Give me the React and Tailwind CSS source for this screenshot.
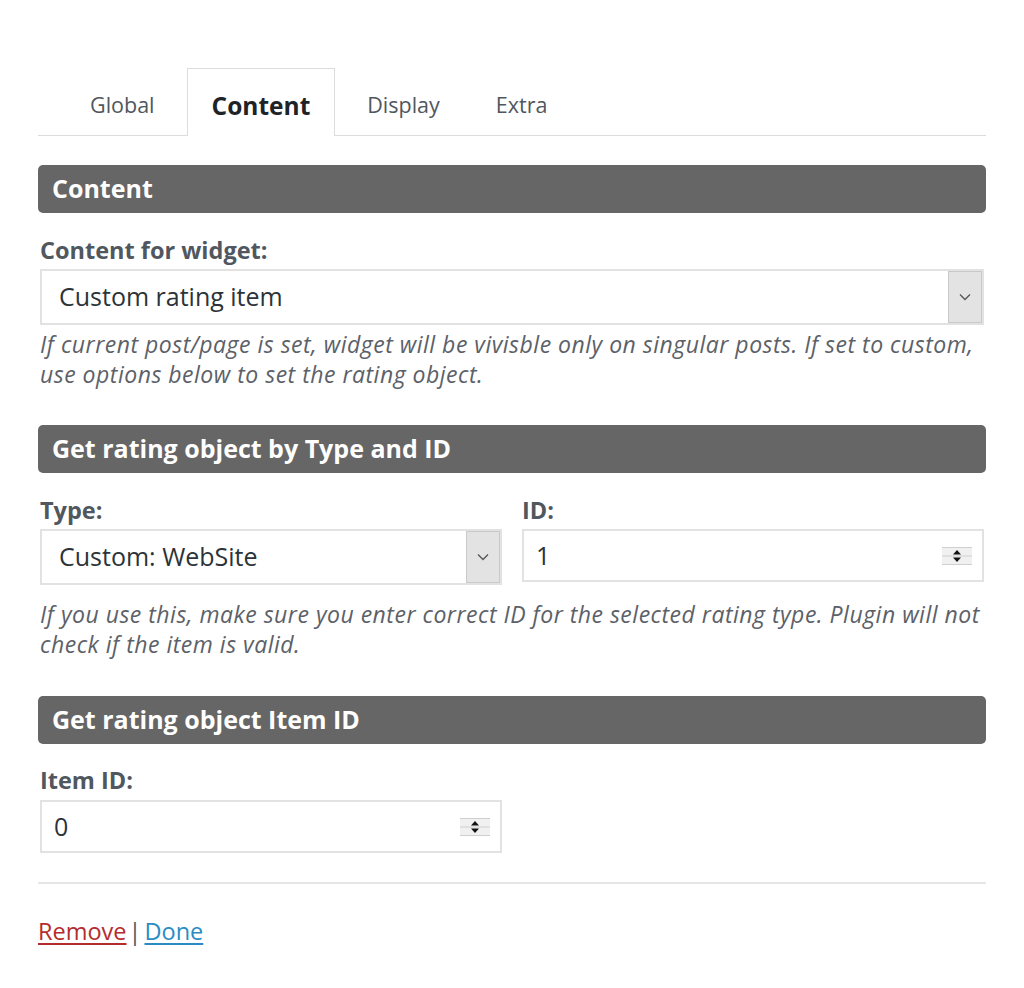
import React from "react"

const font = { fontFamily: '"Open Sans", "Noto Sans", sans-serif' }

function Spinner() {
  return (
    <svg width="30" height="20" viewBox="0 0 30 20" className="absolute right-[10px] top-1/2 -translate-y-1/2">
      <rect x="0" y="1" width="30" height="18" fill="#f0f0f0" />
      <line x1="0" y1="1.5" x2="30" y2="1.5" stroke="#cfcfcf" />
      <line x1="0" y1="10" x2="30" y2="10" stroke="#cfcfcf" />
      <line x1="0" y1="18.5" x2="30" y2="18.5" stroke="#cfcfcf" />
      <path d="M11 8.5 L15 4 L19 8.5 Z" fill="#111" />
      <path d="M11 11.5 L15 16 L19 11.5 Z" fill="#111" />
    </svg>
  )
}

function SelectBox({ value, className }) {
  return (
    <div className={"flex h-[56px] items-stretch border-2 border-[#e2e2e2] bg-white " + className}>
      <div className="flex flex-1 items-center pl-[17px] text-[25px] text-[#2c3338]">{value}</div>
      <div className="flex w-[34px] items-center justify-center border border-[#c9c9c9] bg-[#e3e3e3]">
        <svg width="12" height="8" viewBox="0 0 12 8">
          <path d="M1 1.5 L6 6.5 L11 1.5" fill="none" stroke="#555" strokeWidth="1.3" />
        </svg>
      </div>
    </div>
  )
}

function NumberBox({ value, className }) {
  return (
    <div className={"relative flex h-[53px] items-center border-2 border-[#e2e2e2] bg-white pl-[12px] text-[25px] text-[#2c3338] " + className}>
      {value}
      <Spinner />
    </div>
  )
}

function Heading({ children, className = "" }) {
  return (
    <div className={"flex h-[48px] items-center rounded-[5px] bg-[#666666] px-[14px] text-[25px] font-bold text-white " + className}>
      {children}
    </div>
  )
}

function Label({ children, className = "" }) {
  return <div className={"text-[23.5px] font-bold leading-[30px] text-[#50575e] " + className}>{children}</div>
}

function Note({ children, className = "" }) {
  return <p className={"text-[23px] italic leading-[30px] tracking-[0.5px] text-[#5c6168] " + className}>{children}</p>
}

export default function App() {
  const tabs = ["Global", "Content", "Display", "Extra"]

  return (
    <div className="min-h-screen bg-white px-[38px] pt-[68px]" style={font}>
      <ul className="flex gap-[8px] border-b border-[#dcdcde] pl-[28px]">
        {tabs.map(t =>
          t === "Content" ? (
            <li key={t} className="-mb-px flex h-[68px] items-center border border-b-0 border-[#dcdcde] bg-white px-[24px] pt-[8px] text-[24.5px] font-bold text-[#1d2327]">
              {t}
            </li>
          ) : (
            <li key={t} className="flex h-[67px] items-center px-[24px] pt-[8px] text-[21.5px] text-[#50575e]">
              {t}
            </li>
          )
        )}
      </ul>

      <Heading className="mt-[29px]">Content</Heading>
      <Label className="mx-[2px] mt-[22px]">Content for widget:</Label>
      <SelectBox value="Custom rating item" className="mx-[2px] mt-[4px]" />
      <Note className="mx-[2px] mt-[4px]">
        If current post/page is set, widget will be vivisble only on singular posts. If set to custom, use options below to set the rating object.
      </Note>

      <Heading className="mt-[36px]">Get rating object by Type and ID</Heading>
      <div className="mx-[2px] mt-[22px] grid grid-cols-2 gap-[20px]">
        <div>
          <Label>Type:</Label>
          <SelectBox value="Custom: WebSite" className="mt-[4px]" />
        </div>
        <div>
          <Label>ID:</Label>
          <NumberBox value="1" className="mt-[4px] h-[52px]" />
        </div>
      </div>
      <Note className="mx-[2px] mt-[14px]">
        If you use this, make sure you enter correct ID for the selected rating type. Plugin will not check if the item is valid.
      </Note>

      <Heading className="mt-[37px]">Get rating object Item ID</Heading>
      <Label className="mx-[2px] mt-[21px]">Item ID:</Label>
      <NumberBox value="0" className="mx-[2px] mt-[5px] w-[462px]" />

      <div className="mt-[29px] border-t-2 border-[#e6e6e6]" />

      <div className="mt-[29px] text-[23.5px] leading-[36px] text-[#50575e]">
        <a href="#" className="text-[#b32d2e] underline underline-offset-[3px]">Remove</a>
        <span className="ml-[2px] mr-[3px]">|</span>
        <a href="#" className="text-[#2b8bc4] underline underline-offset-[3px]">Done</a>
      </div>
    </div>
  )
}
